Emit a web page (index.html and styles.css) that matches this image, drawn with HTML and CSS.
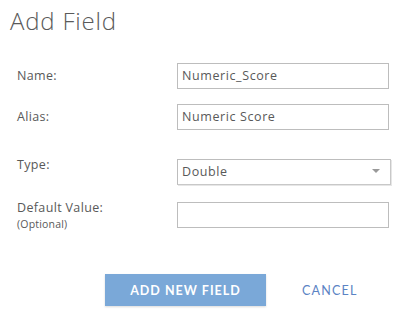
FILE: index.html
```html
<!DOCTYPE html>
<html>
<head>
<meta charset="utf-8">
<link rel="stylesheet" href="styles.css">
</head>
<body>
<div class="dialog">
  <h1 class="title">Add Field</h1>
  <div class="row row-name">
    <label class="label">Name:</label>
    <div class="control">Numeric_Score</div>
  </div>
  <div class="row row-alias">
    <label class="label">Alias:</label>
    <div class="control">Numeric Score</div>
  </div>
  <div class="row row-type row-top">
    <label class="label">Type:</label>
    <div class="control select">
      <span>Double</span>
      <svg class="arrow" width="8" height="4" viewBox="0 0 8 4"><polygon points="0,0 8,0 4,4" fill="#999"/></svg>
    </div>
  </div>
  <div class="row row-default row-top">
    <label class="label">Default Value:<span class="optional">(Optional)</span></label>
    <div class="control"></div>
  </div>
  <div class="actions">
    <button class="btn-primary">ADD NEW FIELD</button>
    <button class="btn-link">CANCEL</button>
  </div>
</div>
</body>
</html>
```
FILE: styles.css
```css
html, body {
  margin: 0;
  padding: 0;
  background: #fff;
}
body {
  font-family: "Open Sans", "Lato", sans-serif;
  color: #555;
}
.dialog {
  width: 395px;
  height: 312px;
  box-sizing: border-box;
  padding: 5px 0 0 0;
}
.title {
  margin: 0 0 0 10px;
  font-size: 24px;
  font-weight: 300;
  line-height: 32px;
  color: #5a5a5a;
  letter-spacing: 0.8px;
}
.row {
  display: flex;
  align-items: center;
  padding-left: 17px;
}
.row-top {
  align-items: flex-start;
}
.row-name { margin-top: 26px; }
.row-alias { margin-top: 15px; }
.row-type { margin-top: 29px; }
.row-default { margin-top: 17px; }
.label {
  width: 160px;
  font-size: 12.5px;
  line-height: 16px;
  color: #595959;
  letter-spacing: 0.35px;
}
.row-top .label {
  margin-top: -2px;
}
.optional {
  display: block;
  font-size: 10.5px;
  line-height: 14px;
  margin-top: 1px;
  letter-spacing: 0.2px;
}
.control {
  width: 212px;
  height: 26px;
  box-sizing: border-box;
  border: 1px solid #bdbdbd;
  font-size: 12.5px;
  line-height: 24px;
  padding: 0 4px;
  color: #595959;
  letter-spacing: 0.6px;
}
.select {
  width: 214px;
  display: flex;
  align-items: center;
  justify-content: space-between;
  padding-right: 10px;
  border-right-color: #c8c8c8;
  border-bottom-color: #c8c8c8;
  box-shadow: 1px 1px 0 #e6e6e6;
}
.arrow {
  display: block;
  margin-top: -3px;
}
.actions {
  display: flex;
  align-items: center;
  margin-top: 43px;
  padding-left: 105px;
}
.btn-primary {
  width: 161px;
  height: 32px;
  border: none;
  background: #7aa8d8;
  color: #fff;
  font-family: "Lato", sans-serif;
  font-weight: 700;
  font-size: 12.5px;
  letter-spacing: 1px;
  padding: 0;
  box-shadow: 0 1px 2px rgba(0,0,0,0.15);
}
.btn-link {
  margin-left: 24px;
  border: none;
  background: none;
  color: #5b83c4;
  font-family: "Lato", sans-serif;
  font-size: 12.5px;
  letter-spacing: 1.2px;
  padding: 8px 12px;
}
```
